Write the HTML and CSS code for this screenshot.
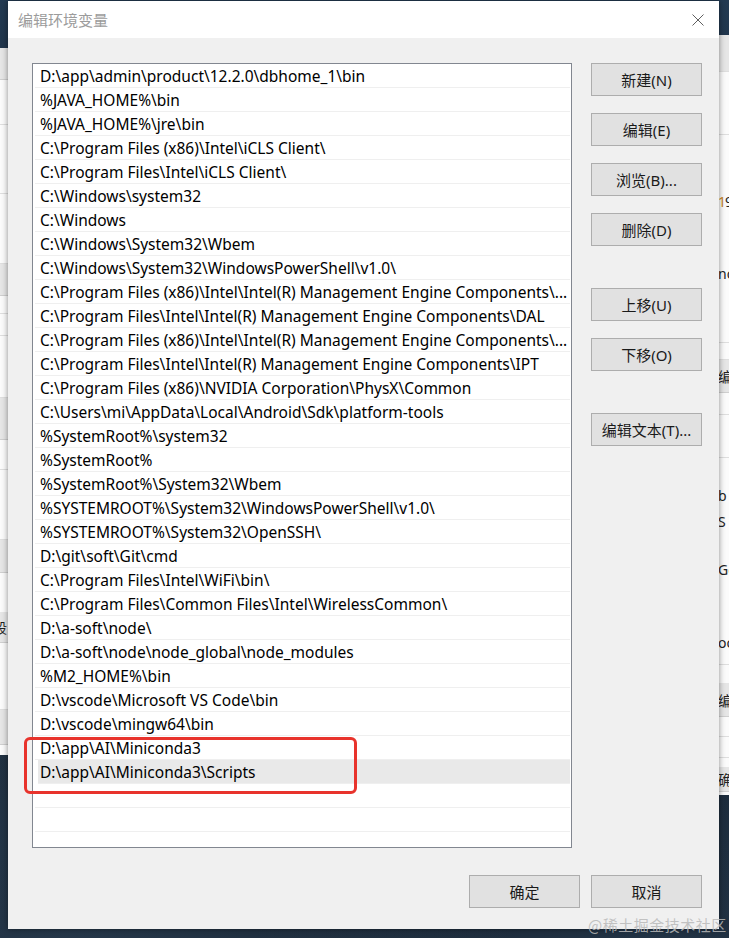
FILE: index.html
```html
<!DOCTYPE html>
<html lang="zh-CN">
<head>
  <meta charset="UTF-8">
  <meta name="viewport" content="width=device-width, initial-scale=1.0">
  <title>编辑环境变量</title>
  <link rel="stylesheet" href="styles.css">
</head>
<body>
  <div class="desktop">

    <!-- windows peeking out behind the dialog -->
    <div class="bg-window bg-left">
      <div class="r gray h32"></div>
      <div class="r line h45"></div>
      <div class="r line h69"></div>
      <div class="r line h70"></div>
      <div class="r gray h32"></div>
      <div class="r line h18"></div>
      <div class="r line h22"></div>
      <div class="r line h62"></div>
      <div class="r gray h42"></div>
      <div class="r line h30"></div>
      <div class="r line h70"></div>
      <div class="r gray h33"></div>
      <div class="r h39"></div>
      <div class="r gray txt h31">段</div>
      <div class="r line h67"></div>
      <div class="r gray h35"></div>
    </div>

    <div class="bg-window bg-right">
      <div class="r gray line h37"></div>
      <div class="r line h63"></div>
      <div class="r h53"></div>
      <div class="r txt h26"><span class="digit">1</span>9</div>
      <div class="r h46"></div>
      <div class="r txt h26">nc</div>
      <div class="r line h57"></div>
      <div class="r line h17"></div>
      <div class="r gray txt h33">编</div>
      <div class="r line h22"></div>
      <div class="r line h43"></div>
      <div class="r h24"></div>
      <div class="r txt h26">b</div>
      <div class="r txt h26">S</div>
      <div class="r h22"></div>
      <div class="r txt h26">Ge</div>
      <div class="r h47"></div>
      <div class="r txt h26">oc</div>
      <div class="r line h10"></div>
      <div class="r h18"></div>
      <div class="r gray txt h34">编</div>
      <div class="r line h20"></div>
      <div class="r line h21"></div>
      <div class="r h9"></div>
      <div class="r gray txt h25">确</div>
    </div>

    <div class="dialog">
      <div class="titlebar">
        <span class="title">编辑环境变量</span>
        <svg class="close" width="12" height="12" viewBox="0 0 12 12">
          <path d="M0.5 0.5 L11.5 11.5 M11.5 0.5 L0.5 11.5" stroke="#5f5f5f" stroke-width="1" fill="none"/>
        </svg>
      </div>

      <div class="content">
        <div class="main">
          <ul class="path-list">
            <li>D:\app\admin\product\12.2.0\dbhome_1\bin</li>
            <li>%JAVA_HOME%\bin</li>
            <li>%JAVA_HOME%\jre\bin</li>
            <li>C:\Program Files (x86)\Intel\iCLS Client\</li>
            <li>C:\Program Files\Intel\iCLS Client\</li>
            <li>C:\Windows\system32</li>
            <li>C:\Windows</li>
            <li>C:\Windows\System32\Wbem</li>
            <li>C:\Windows\System32\WindowsPowerShell\v1.0\</li>
            <li>C:\Program Files (x86)\Intel\Intel(R) Management Engine Components\...</li>
            <li>C:\Program Files\Intel\Intel(R) Management Engine Components\DAL</li>
            <li>C:\Program Files (x86)\Intel\Intel(R) Management Engine Components\...</li>
            <li>C:\Program Files\Intel\Intel(R) Management Engine Components\IPT</li>
            <li>C:\Program Files (x86)\NVIDIA Corporation\PhysX\Common</li>
            <li>C:\Users\mi\AppData\Local\Android\Sdk\platform-tools</li>
            <li>%SystemRoot%\system32</li>
            <li>%SystemRoot%</li>
            <li>%SystemRoot%\System32\Wbem</li>
            <li>%SYSTEMROOT%\System32\WindowsPowerShell\v1.0\</li>
            <li>%SYSTEMROOT%\System32\OpenSSH\</li>
            <li>D:\git\soft\Git\cmd</li>
            <li>C:\Program Files\Intel\WiFi\bin\</li>
            <li>C:\Program Files\Common Files\Intel\WirelessCommon\</li>
            <li>D:\a-soft\node\</li>
            <li>D:\a-soft\node\node_global\node_modules</li>
            <li>%M2_HOME%\bin</li>
            <li>D:\vscode\Microsoft VS Code\bin</li>
            <li>D:\vscode\mingw64\bin</li>
            <li>D:\app\AI\Miniconda3</li>
            <li class="selected">D:\app\AI\Miniconda3\Scripts</li>
            <li></li>
            <li></li>
          </ul>

          <div class="side-buttons">
            <button>新建(N)</button>
            <button>编辑(E)</button>
            <button>浏览(B)...</button>
            <button>删除(D)</button>
            <button class="spaced">上移(U)</button>
            <button>下移(O)</button>
            <button class="spaced">编辑文本(T)...</button>
          </div>
        </div>

        <div class="footer">
          <button>确定</button>
          <button>取消</button>
        </div>
      </div>
    </div>

    <div class="highlight-box"></div>
    <div class="watermark">@稀土掘金技术社区</div>
  </div>
</body>
</html>
```

FILE: styles.css
```css
/* Global */
body {
  margin: 0;
  padding: 0;
  font-family: 'Segoe UI', 'Noto Sans', 'Noto Sans CJK SC', sans-serif;
  background-color: #16202c;
}

.desktop {
  position: relative;
  width: 729px;
  height: 938px;
  overflow: hidden;
  background:
    radial-gradient(circle at 10% 95%, rgba(60, 90, 120, 0.35), transparent 40%),
    radial-gradient(circle at 90% 100%, rgba(50, 80, 110, 0.3), transparent 35%),
    linear-gradient(#233a52, #15202d 30%, #1a2633);
}

/* Background windows */
.bg-window {
  position: absolute;
  display: flex;
  flex-direction: column;
  background-color: #fbfbfb;
  overflow: hidden;
}

.bg-left {
  left: 0;
  top: 48px;
  width: 8px;
  height: 707px;
}

.bg-right {
  left: 719px;
  top: 35px;
  width: 10px;
  height: 760px;
}

.bg-window .r {
  flex: none;
  box-sizing: border-box;
  font-size: 14px;
  color: #222;
  white-space: nowrap;
  overflow: hidden;
}

.bg-window .gray {
  background-color: #e6e6e6;
  border-bottom: 1px solid #cfcfcf;
}

.bg-window .line {
  border-bottom: 1px solid #dedede;
}

.bg-window .txt {
  display: flex;
  align-items: center;
}

.bg-left .txt {
  text-indent: -7px;
}

.bg-right .txt {
  text-indent: -1px;
}

.bg-window .digit {
  color: #c7842a;
}

.h9 { height: 9px; }
.h10 { height: 10px; }
.h17 { height: 17px; }
.h18 { height: 18px; }
.h20 { height: 20px; }
.h21 { height: 21px; }
.h22 { height: 22px; }
.h24 { height: 24px; }
.h25 { height: 25px; }
.h26 { height: 26px; }
.h30 { height: 30px; }
.h31 { height: 31px; }
.h32 { height: 32px; }
.h33 { height: 33px; }
.h34 { height: 34px; }
.h35 { height: 35px; }
.h37 { height: 37px; }
.h39 { height: 39px; }
.h42 { height: 42px; }
.h43 { height: 43px; }
.h45 { height: 45px; }
.h46 { height: 46px; }
.h47 { height: 47px; }
.h53 { height: 53px; }
.h57 { height: 57px; }
.h62 { height: 62px; }
.h63 { height: 63px; }
.h67 { height: 67px; }
.h69 { height: 69px; }
.h70 { height: 70px; }

/* Dialog */
.dialog {
  position: absolute;
  left: 8px;
  top: 1px;
  width: 711px;
  height: 928px;
  display: flex;
  flex-direction: column;
  background-color: #f0f0f0;
  box-shadow: 0 0 6px rgba(0, 0, 0, 0.45);
}

.titlebar {
  flex: none;
  height: 37px;
  display: flex;
  align-items: center;
  background-color: #fff;
  padding-left: 10px;
}

.title {
  font-size: 15px;
  color: #9c9c9c;
  font-family: 'Noto Sans CJK SC', sans-serif;
}

.close {
  margin-left: auto;
  margin-right: 15px;
}

.content {
  flex: 1;
  display: flex;
  flex-direction: column;
  padding: 25px 17px 21px 24px;
}

.main {
  display: flex;
  gap: 19px;
}

/* Path list */
.path-list {
  list-style: none;
  margin: 0;
  padding: 0;
  width: 540px;
  height: 785px;
  box-sizing: border-box;
  border: 1px solid #828790;
  background-color: #fff;
  overflow: hidden;
}

.path-list li {
  height: 24px;
  line-height: 21px;
  box-sizing: border-box;
  margin: 0 1px 0 2px;
  padding-top: 2px;
  padding-left: 5px;
  border-bottom: 1px solid #efefef;
  font-size: 15.5px;
  color: #000;
  white-space: nowrap;
  overflow: hidden;
}

.path-list li.selected {
  margin-left: 5px;
  padding-left: 2px;
  background-color: #e9e9e9;
}

/* Buttons */
button {
  width: 111px;
  height: 33px;
  padding: 0;
  box-sizing: border-box;
  background-color: #e1e1e1;
  border: 1px solid #adadad;
  border-radius: 0;
  font-family: 'Segoe UI', 'Noto Sans', 'Noto Sans CJK SC', sans-serif;
  font-size: 15px;
  color: #1a1a1a;
}

.side-buttons {
  display: flex;
  flex-direction: column;
  gap: 17px;
}

.side-buttons .spaced {
  margin-top: 25px;
}

.footer {
  margin-top: auto;
  display: flex;
  justify-content: flex-end;
  gap: 11px;
}

/* Overlays */
.highlight-box {
  position: absolute;
  left: 24px;
  top: 737px;
  width: 333px;
  height: 57px;
  box-sizing: border-box;
  border: 3px solid #e8332c;
  border-radius: 6px;
}

.watermark {
  position: absolute;
  left: 588px;
  top: 914px;
  font-family: 'Noto Sans CJK SC', sans-serif;
  font-size: 15px;
  color: rgba(185, 185, 185, 0.85);
  white-space: nowrap;
  letter-spacing: 0.5px;
}
```
